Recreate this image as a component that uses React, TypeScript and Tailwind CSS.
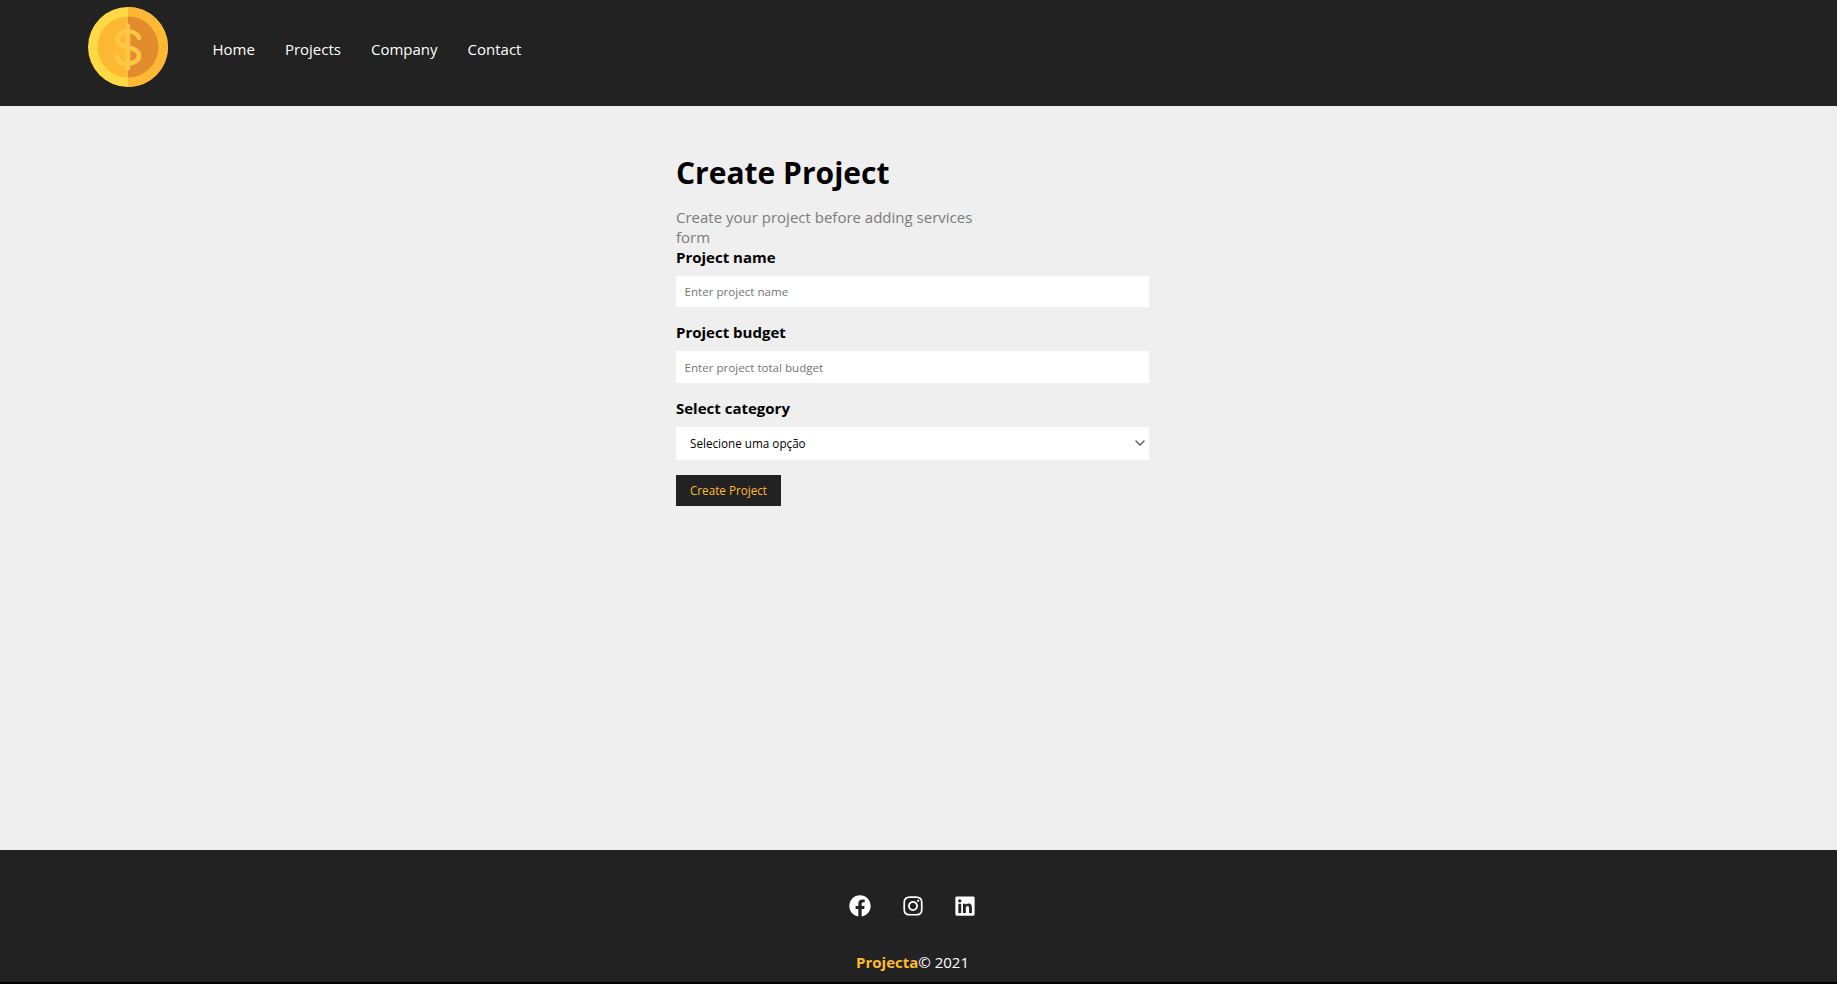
import { ChevronDown } from 'lucide-react';
import { FaFacebook, FaInstagram, FaLinkedin } from 'react-icons/fa';

function CoinLogo() {
    return (
        <svg viewBox="0 0 80 80" className="h-20 w-20" aria-label="Logo">
            <circle cx="40" cy="40" r="40" fill="#ffda44" />
            <path d="M40 0a40 40 0 0 1 0 80z" fill="#ffb833" />
            <circle cx="40" cy="40" r="30.5" fill="#ffb833" />
            <path d="M40 9.500a30.5 30.5 0 0 1 0 61z" fill="#e38c2d" />
            <path
                d="M51 31c-1-4-5.500-6.500-11-6.500s-10.500 3-10.500 8c0 5.500 5 7 10.500 8s11 2.500 11 8c0 5-5 8-11 8s-10.500-2.500-11.500-7M40 19v42"
                fill="none"
                stroke="#ffc744"
                strokeWidth="4.5"
                strokeLinecap="round"
            />
        </svg>
    );
}

function Field({ label, placeholder, className, inputClass }: { label: string; placeholder: string; className: string; inputClass: string }) {
    return (
        <div className={`flex flex-col ${className}`}>
            <label className="mb-[8px] text-[15px] leading-[21px] font-bold">{label}</label>
            <input
                type="text"
                placeholder={placeholder}
                className={`bg-white px-[8.500px] text-[11.6px] placeholder:text-[#757575] ${inputClass}`}
            />
        </div>
    );
}

export default function App() {
    return (
        <div className="flex min-h-[984px] flex-col bg-black font-['Open_Sans',sans-serif] text-black">
            <nav className="flex h-[106px] items-start bg-[#222222] pl-[88px] pt-[7px]">
                <CoinLogo />
                <ul className="ml-[44.5px] flex h-[84px] items-center gap-[30px] text-[15px] text-white">
                    <li>Home</li>
                    <li>Projects</li>
                    <li>Company</li>
                    <li>Contact</li>
                </ul>
            </nav>

            <main className="flex h-[744px] justify-center bg-[#efefef] pr-3 pt-[46px]">
                <div className="w-[473px]">
                    <h1 className="mb-[14px] text-[30px] leading-[41px] font-bold">Create Project</h1>
                    <p className="text-[15px] leading-[20px] text-[#7b7b7b]">Create your project before adding services</p>
                    <p className="text-[15px] leading-[20px] text-[#7b7b7b]">form</p>
                    <form>
                        <Field label="Project name" placeholder="Enter project name" className="mb-[15px]" inputClass="h-[31px]" />
                        <Field label="Project budget" placeholder="Enter project total budget" className="mb-[15px]" inputClass="h-[32px]" />
                        <div className="mb-[15px] flex flex-col">
                            <label className="mb-[8px] text-[15px] leading-[21px] font-bold">Select category</label>
                            <div className="relative">
                                <select className="h-[33px] w-full appearance-none bg-white px-[14px] text-[11.7px]">
                                    <option>Selecione uma opção</option>
                                </select>
                                <ChevronDown className="pointer-events-none absolute right-[1px] top-[8px] h-4 w-4 text-[#555555]" />
                            </div>
                        </div>
                        <button type="button" className="h-[31px] w-[105px] bg-[#222222] text-[11.7px] text-[#ffbb33]">
                            Create Project
                        </button>
                    </form>
                </div>
            </main>

            <footer className="flex h-[132px] flex-col items-center bg-[#222222] pr-3 text-white">
                <ul className="mt-[45px] flex gap-[30.500px] text-[22px]">
                    <li><FaFacebook /></li>
                    <li><FaInstagram /></li>
                    <li><FaLinkedin /></li>
                </ul>
                <p className="mt-[35px] text-[15px] leading-[20px]">
                    <span className="font-bold text-[#ffbb33]">Projecta</span>© 2021
                </p>
            </footer>
        </div>
    );
}
